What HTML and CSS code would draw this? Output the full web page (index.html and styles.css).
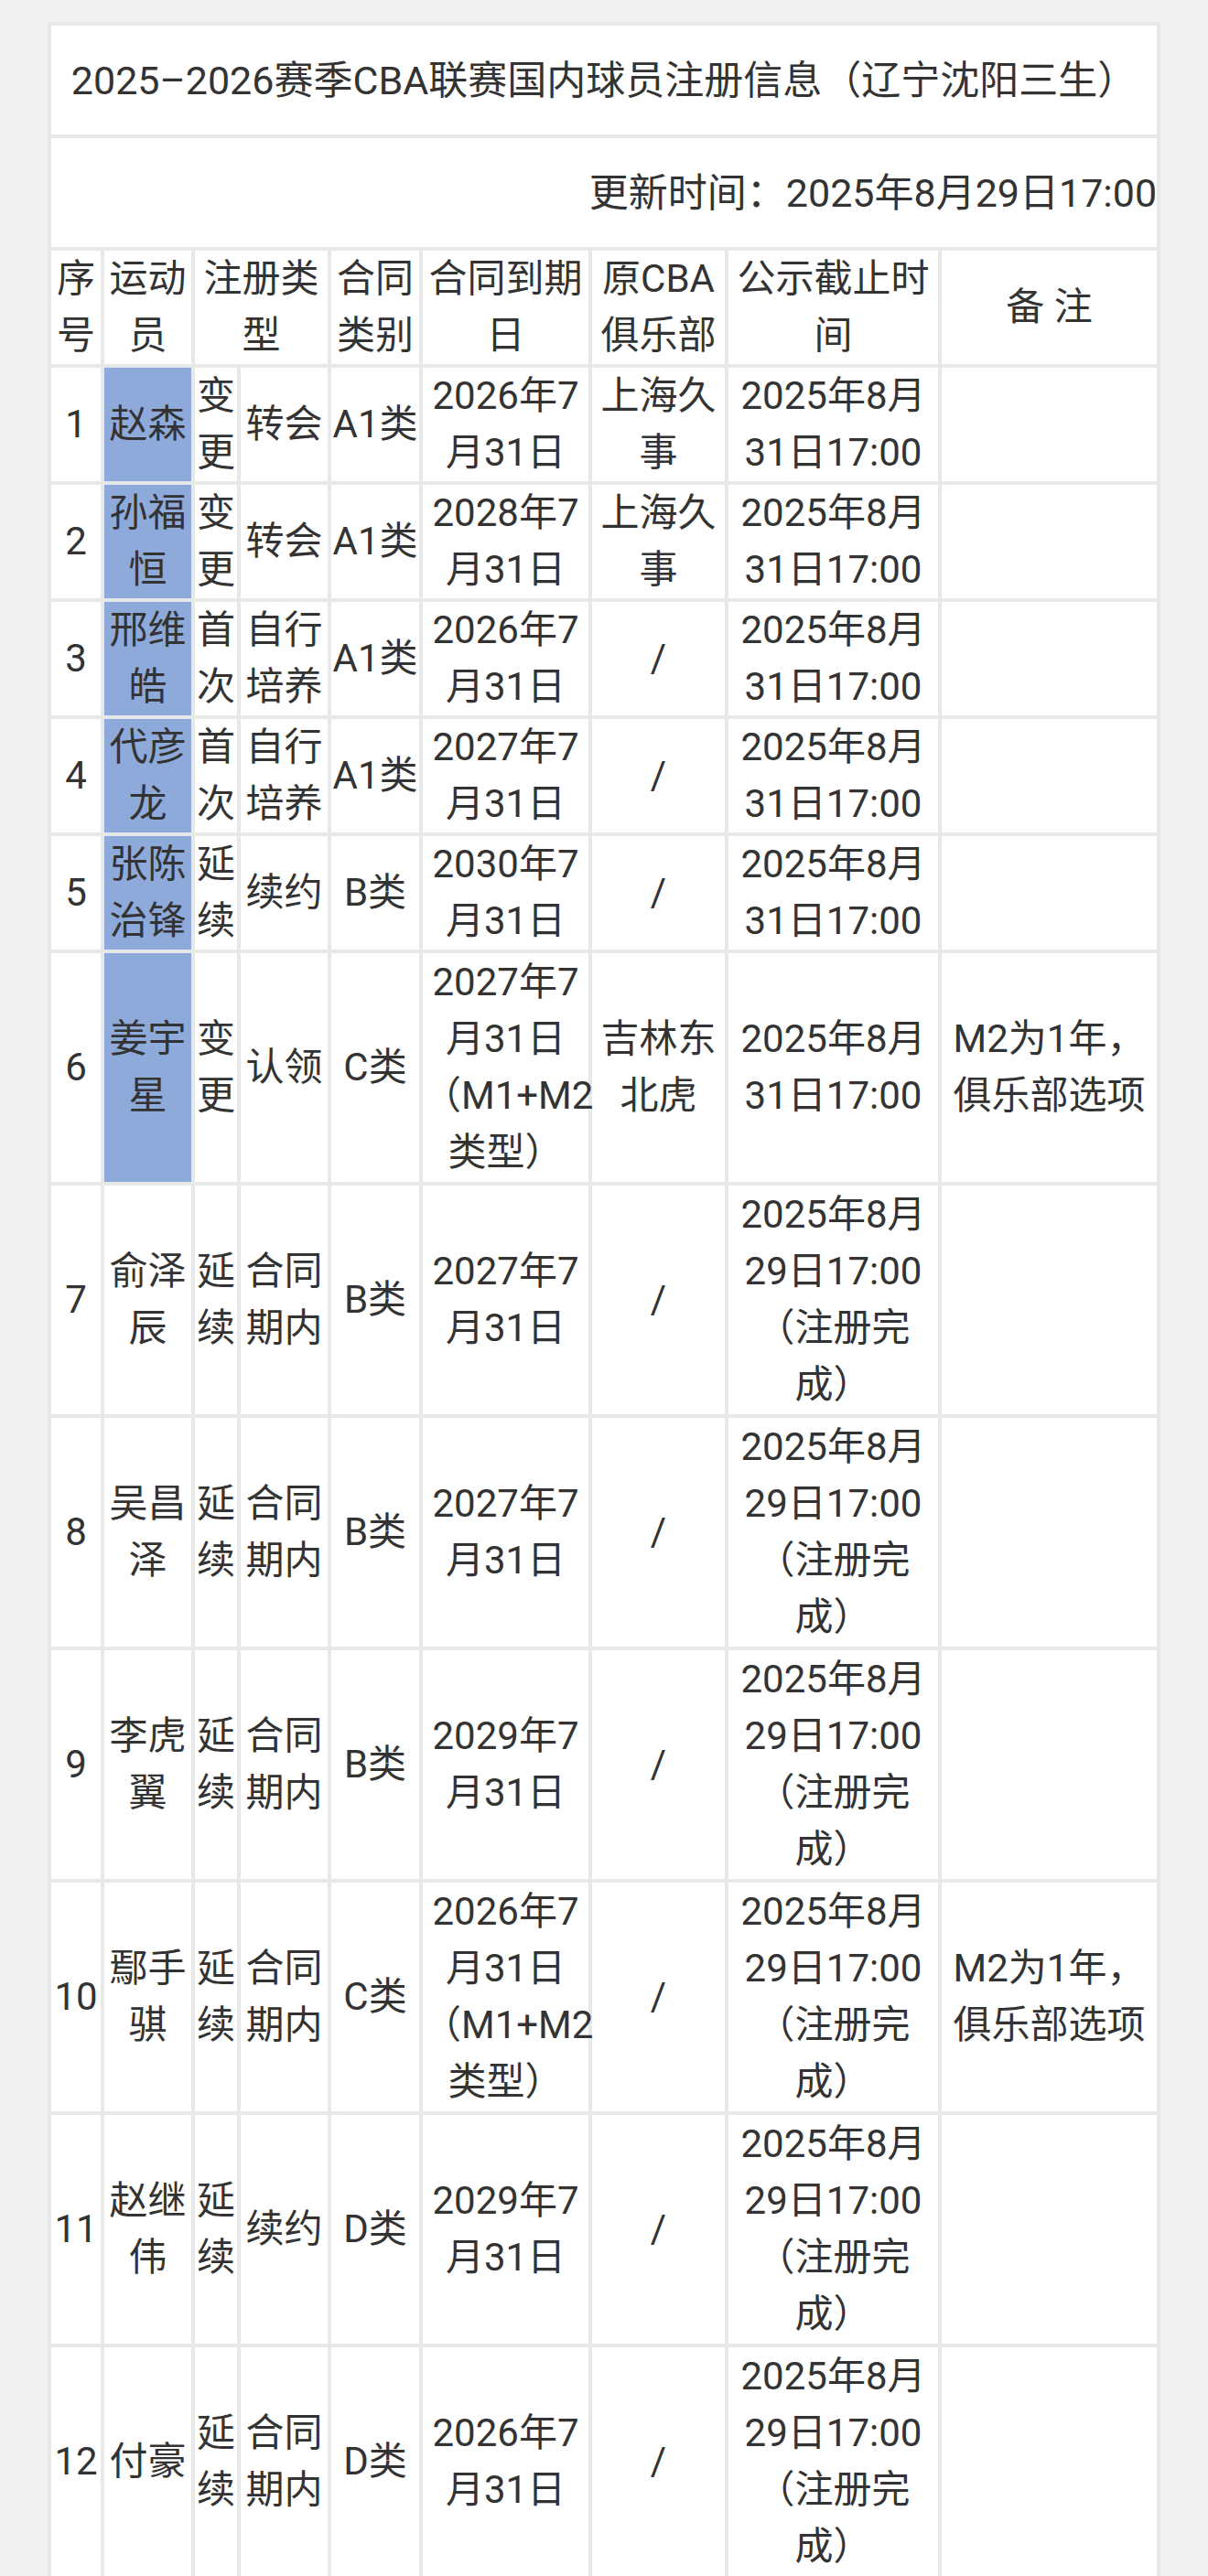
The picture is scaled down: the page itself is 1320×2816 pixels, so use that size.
FILE: index.html
```html
<!DOCTYPE html>
<html lang="zh-CN">
<head>
<meta charset="utf-8">
<title>2025–2026赛季CBA联赛国内球员注册信息（辽宁沈阳三生）</title>
<link rel="stylesheet" href="styles.css">
</head>
<body>
<table class="reg">
  <colgroup>
    <col class="c-no">
    <col class="c-name">
    <col class="c-kind1">
    <col class="c-kind2">
    <col class="c-type">
    <col class="c-exp">
    <col class="c-club">
    <col class="c-dead">
    <col class="c-note">
  </colgroup>
  <tr class="r-title"><td colspan="9" class="title">2025–2026赛季CBA联赛国内球员注册信息（辽宁沈阳三生）</td></tr>
  <tr class="r-title"><td colspan="9" class="updated">更新时间：2025年8月29日17:00</td></tr>
  <tr class="r2">
    <td>序<br>号</td>
    <td>运动<br>员</td>
    <td colspan="2">注册类<br>型</td>
    <td>合同<br>类别</td>
    <td>合同到期<br>日</td>
    <td>原CBA<br>俱乐部</td>
    <td>公示截止时<br>间</td>
    <td>备 注</td>
  </tr>
  <tr class="r2">
    <td>1</td><td class="hl">赵森</td><td>变<br>更</td><td>转会</td><td>A1类</td>
    <td>2026年7<br>月31日</td><td>上海久<br>事</td><td>2025年8月<br>31日17:00</td><td></td>
  </tr>
  <tr class="r2">
    <td>2</td><td class="hl">孙福<br>恒</td><td>变<br>更</td><td>转会</td><td>A1类</td>
    <td>2028年7<br>月31日</td><td>上海久<br>事</td><td>2025年8月<br>31日17:00</td><td></td>
  </tr>
  <tr class="r2">
    <td>3</td><td class="hl">邢维<br>皓</td><td>首<br>次</td><td>自行<br>培养</td><td>A1类</td>
    <td>2026年7<br>月31日</td><td>/</td><td>2025年8月<br>31日17:00</td><td></td>
  </tr>
  <tr class="r2">
    <td>4</td><td class="hl">代彦<br>龙</td><td>首<br>次</td><td>自行<br>培养</td><td>A1类</td>
    <td>2027年7<br>月31日</td><td>/</td><td>2025年8月<br>31日17:00</td><td></td>
  </tr>
  <tr class="r2">
    <td>5</td><td class="hl">张陈<br>治锋</td><td>延<br>续</td><td>续约</td><td>B类</td>
    <td>2030年7<br>月31日</td><td>/</td><td>2025年8月<br>31日17:00</td><td></td>
  </tr>
  <tr class="r4">
    <td>6</td><td class="hl">姜宇<br>星</td><td>变<br>更</td><td>认领</td><td>C类</td>
    <td>2027年7<br>月31日<br>（M1+M2<br>类型）</td><td>吉林东<br>北虎</td><td>2025年8月<br>31日17:00</td><td>M2为1年，<br>俱乐部选项</td>
  </tr>
  <tr class="r4">
    <td>7</td><td>俞泽<br>辰</td><td>延<br>续</td><td>合同<br>期内</td><td>B类</td>
    <td>2027年7<br>月31日</td><td>/</td><td>2025年8月<br>29日17:00<br>（注册完<br>成）</td><td></td>
  </tr>
  <tr class="r4">
    <td>8</td><td>吴昌<br>泽</td><td>延<br>续</td><td>合同<br>期内</td><td>B类</td>
    <td>2027年7<br>月31日</td><td>/</td><td>2025年8月<br>29日17:00<br>（注册完<br>成）</td><td></td>
  </tr>
  <tr class="r4">
    <td>9</td><td>李虎<br>翼</td><td>延<br>续</td><td>合同<br>期内</td><td>B类</td>
    <td>2029年7<br>月31日</td><td>/</td><td>2025年8月<br>29日17:00<br>（注册完<br>成）</td><td></td>
  </tr>
  <tr class="r4">
    <td>10</td><td>鄢手<br>骐</td><td>延<br>续</td><td>合同<br>期内</td><td>C类</td>
    <td>2026年7<br>月31日<br>（M1+M2<br>类型）</td><td>/</td><td>2025年8月<br>29日17:00<br>（注册完<br>成）</td><td>M2为1年，<br>俱乐部选项</td>
  </tr>
  <tr class="r4">
    <td>11</td><td>赵继<br>伟</td><td>延<br>续</td><td>续约</td><td>D类</td>
    <td>2029年7<br>月31日</td><td>/</td><td>2025年8月<br>29日17:00<br>（注册完<br>成）</td><td></td>
  </tr>
  <tr class="r4">
    <td>12</td><td>付豪</td><td>延<br>续</td><td>合同<br>期内</td><td>D类</td>
    <td>2026年7<br>月31日</td><td>/</td><td>2025年8月<br>29日17:00<br>（注册完<br>成）</td><td></td>
  </tr>
</table>
</body>
</html>
```
FILE: styles.css
```css
html, body {
  margin: 0;
  padding: 0;
  background: #f1f1f1;
}

body {
  font-family: "Roboto", "Noto Sans CJK SC", sans-serif;
  color: #333333;
}

.reg {
  margin: 24px 0 0 52px;
  width: 1216px;
  table-layout: fixed;
  border-collapse: separate;
  border-spacing: 4px;
  background: #e8e8e8;
  font-size: 42px;
  line-height: 62px;
}

.c-no { width: 54px; }
.c-name { width: 95px; }
.c-kind1 { width: 46px; }
.c-kind2 { width: 95px; }
.c-type { width: 96px; }
.c-exp { width: 181px; }
.c-club { width: 145px; }
.c-dead { width: 229px; }
.c-note { width: 235px; }

.reg td {
  background: #ffffff;
  padding: 0;
  text-align: center;
  vertical-align: middle;
  white-space: nowrap;
}

.reg td.hl {
  background: #8eaadb;
}

.r-title { height: 119px; }
.r2 { height: 124px; }
.r4 { height: 250px; }

.reg td.title {
  text-align: center;
  font-size: 43px;
}

.reg td.updated {
  text-align: right;
  font-size: 43px;
}
```
